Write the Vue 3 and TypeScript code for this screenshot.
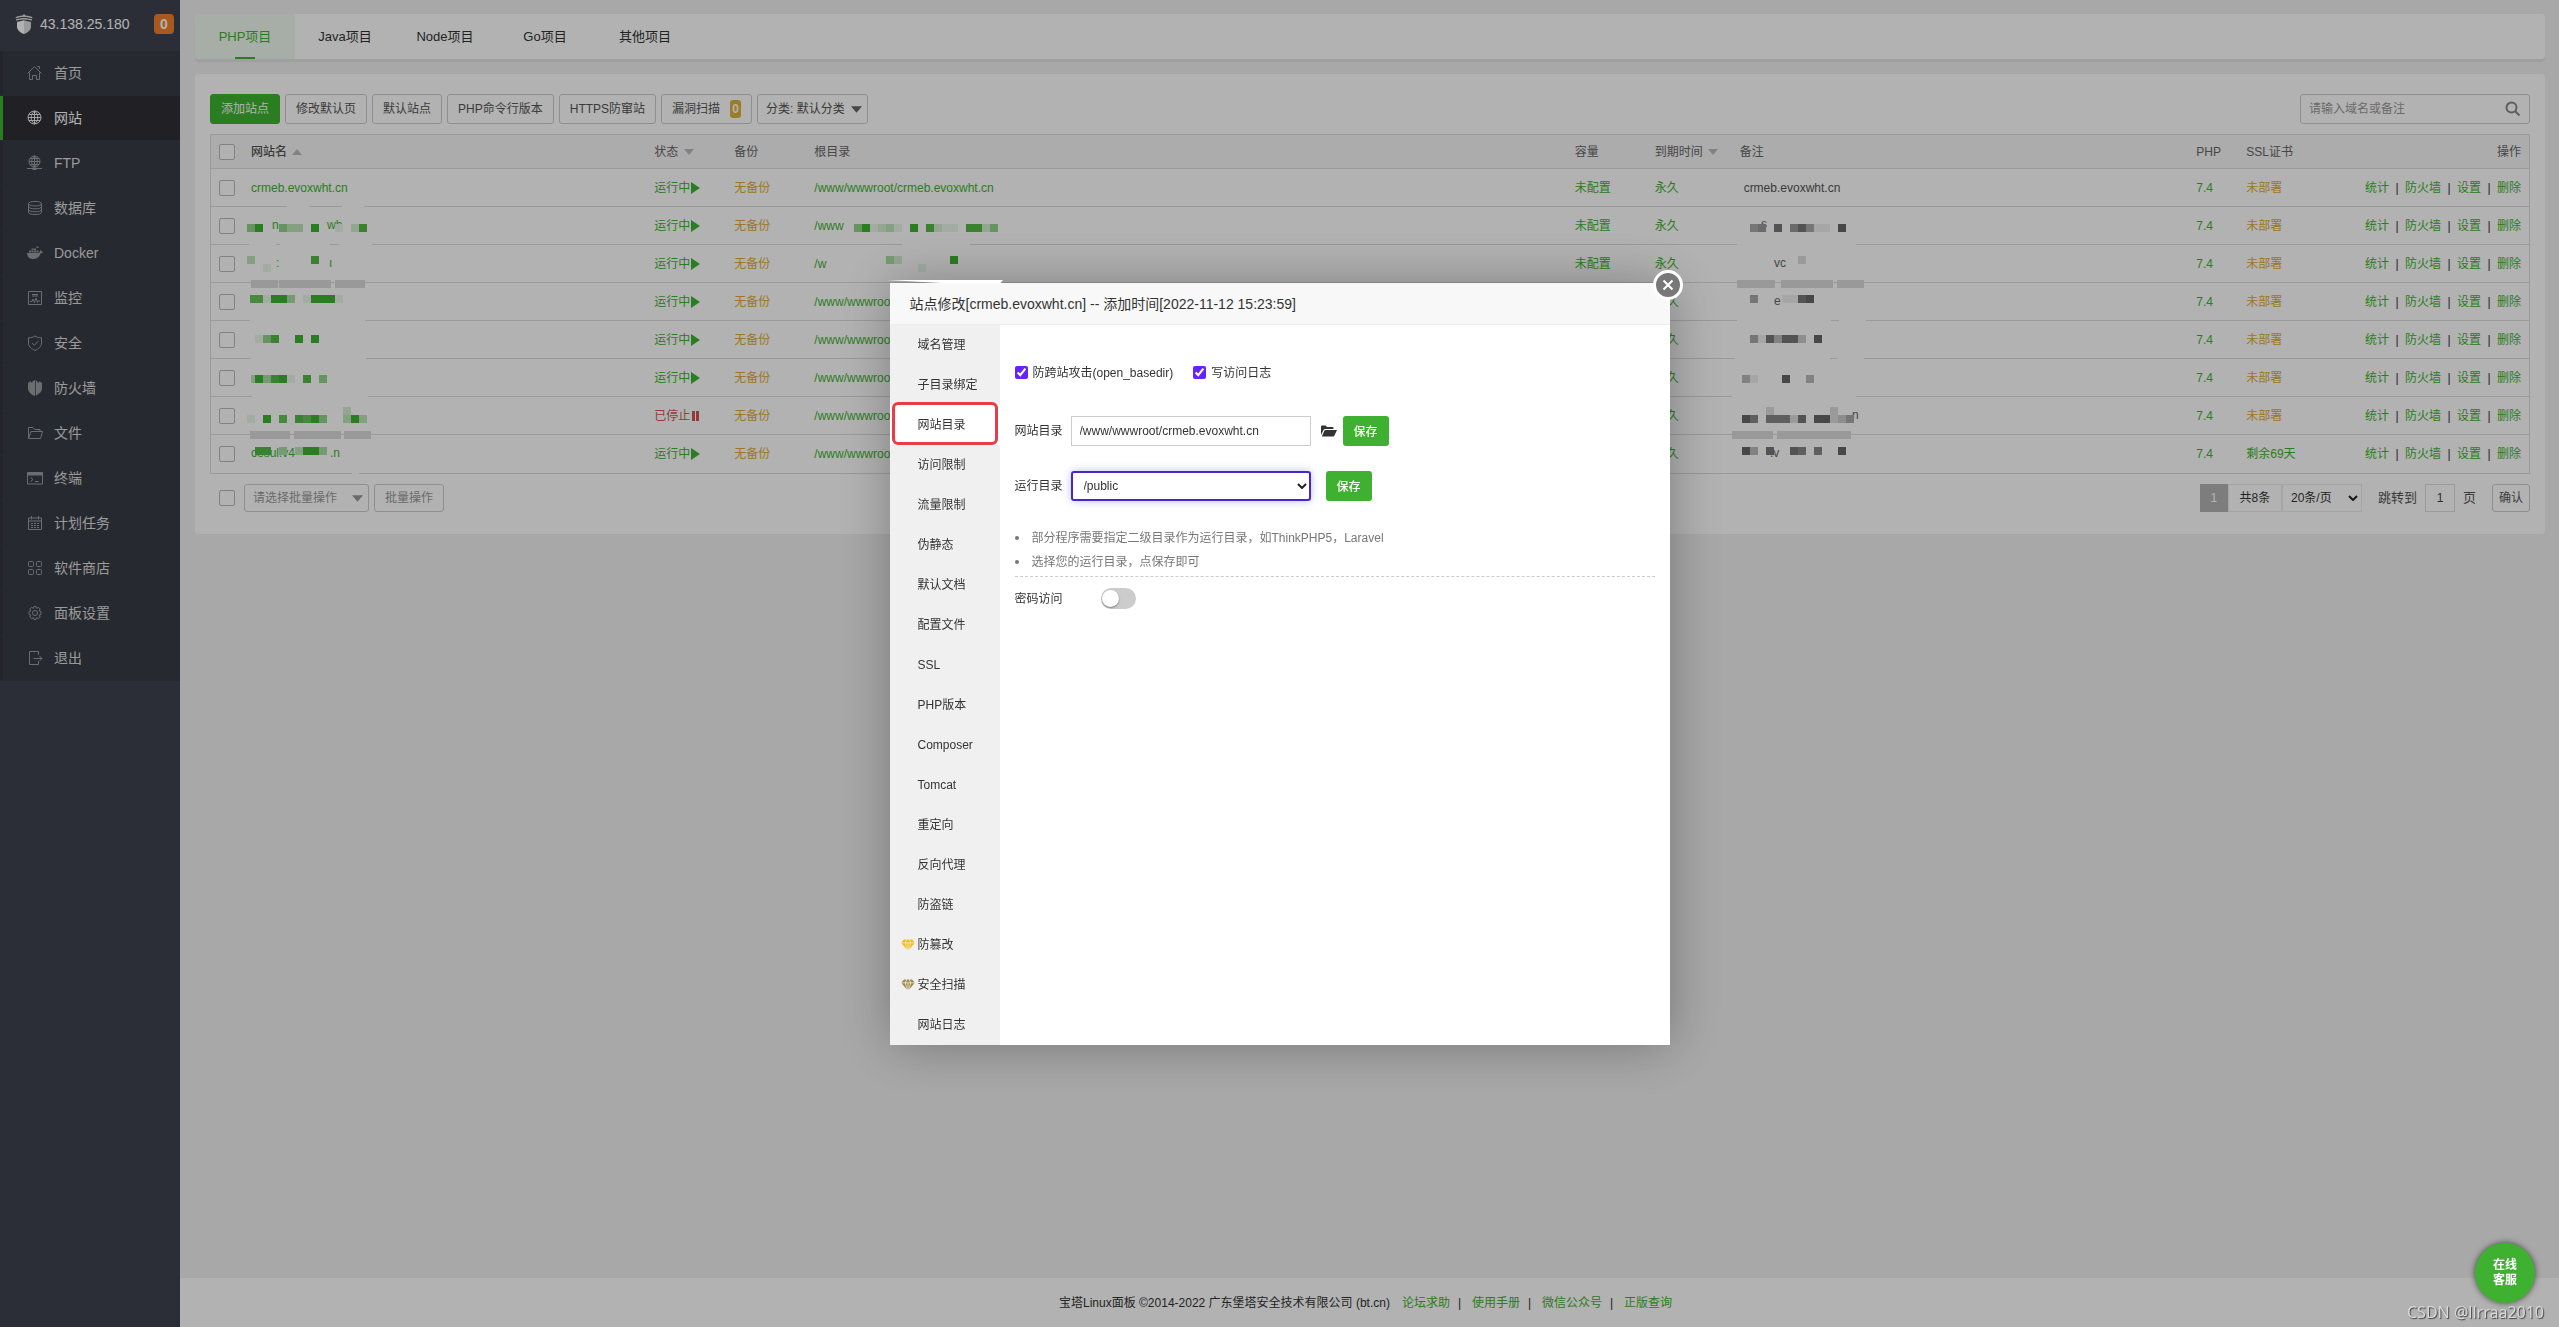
<script setup lang="ts">
import { ref } from 'vue'

interface Icon { stroke?: string; fill?: string }
interface MenuItem { label: string; icon: Icon; active?: boolean }
interface Strip { x: number; y: number; ops: string }
interface Rect { x: number; y: number; w: number; h: number }
interface Fragment { x: number; y: number; t: string }
interface Mask { strips?: Strip[]; gaps?: Rect[]; bars?: Rect[]; frags?: Fragment[] }
interface Site {
  name: string; running: boolean; path: string; note: string; ssl: string; deployed?: boolean
  nameMask?: Mask; pathMask?: Mask; noteMask?: Mask
}

const menu: MenuItem[] = [
  { label: '首页', icon: { stroke: 'M.5 8.500 7.500 1.500l7 7M2.500 7.500v7h3v-4h4v4h3v-7M10.500 1.500h2v2.500' } },
  { label: '网站', active: true, icon: { stroke: 'M7.500 1a6.500 6.500 0 1 0 0 13a6.500 6.500 0 1 0 0-13zM7.500 1v13M1 7.500h13M2 4.500h11M2 10.500h11M7.500 1c-4.500 3.500-4.500 9.500 0 13M7.500 1c4.500 3.500 4.500 9.500 0 13' } },
  { label: 'FTP', icon: { stroke: 'M7.500 1a5.500 5.500 0 1 0 0 11a5.500 5.500 0 1 0 0-11zM7.500 1v11M2 6.500h11M3 3.500h9M3 9.500h9M7.500 1c-3.800 3-3.800 8 0 11M7.500 1c3.800 3 3.800 8 0 11M0 13.500h15', fill: 'M5.500 12.500h4V15h-4z' } },
  { label: '数据库', icon: { stroke: 'M1.500 3.700c0-3 13-3 13 0s-13 3-13 0v8.600c0 3 13 3 13 0V3.700M1.500 6.600c0 3 13 3 13 0M1.500 9.500c0 3 13 3 13 0' } },
  { label: 'Docker', icon: { fill: 'M0 8h11.500c1 0 1.500-.6 1.300-2l.7-1c.8.5 1.100 1.200 1 1.800.6 0 1.100 0 1.500.3-.4 1-1.400 1.400-2.500 1.400C12.300 12 9.800 14 6 14 2.500 14 0 12 0 8zM2 5.500h2v2H2zM4.500 5.500h2v2h-2zM7 5.500h2v2H7zM9.500 5.500h2v2h-2zM4.500 3.500h2v1.500h-2zM7 3.500h2v1.500H7zM9.500 1.500h2V3h-2z' } },
  { label: '监控', icon: { stroke: 'M1.500 1.500h13v13h-13zM3 11.500h2l1-2.500 1.500 3.500L9 8l1.500 4.500.8-1.500H13M5 4.500h6M5 6h6' } },
  { label: '安全', icon: { stroke: 'M8 1c2 1.300 4.300 1.800 6.500 1.800V8c0 3.500-3 6-6.500 7.500C4.500 14 1.500 11.500 1.500 8V2.800C3.700 2.800 6 2.300 8 1zM5 8l2.300 2.300L11.500 6' } },
  { label: '防火墙', icon: { fill: 'M8 0v16C4 14.500 1 12 1 8V2.500h1.500v-1H4v1h1.500V1H7V0zM8.700.5v15C12 14 15 12 15 8V2.500h-1.500v-1H12v1h-1.500V1z' } },
  { label: '文件', icon: { stroke: 'M1.500 13.500v-11h4.500l1.500 2h5.500v2M1.500 13.500l2.500-7h11.500l-2 7z' } },
  { label: '终端', icon: { stroke: 'M.5 2.500h15v11.500H.5zM.5 5h15M3.500 7.500 6 9.500l-2.500 2M8 11.500h3.500', fill: 'M.5 2.500h15V5H.5z' } },
  { label: '计划任务', icon: { stroke: 'M1.500 3h13v11.500h-13zM1.500 6h13M4.500 1v3.500M11.500 1v3.500M4 8.500h2M7 8.500h2M10 8.500h2M4 10.500h2M7 10.500h2M10 10.500h2M4 12.500h2M7 12.500h2M10 12.500h2' } },
  { label: '软件商店', icon: { stroke: 'M2.500 1.500h3a1 1 0 0 1 1 1v3a1 1 0 0 1-1 1h-3a1 1 0 0 1-1-1v-3a1 1 0 0 1 1-1zM10.500 1.500h3a1 1 0 0 1 1 1v3a1 1 0 0 1-1 1h-3a1 1 0 0 1-1-1v-3a1 1 0 0 1 1-1zM2.500 9.500h3a1 1 0 0 1 1 1v3a1 1 0 0 1-1 1h-3a1 1 0 0 1-1-1v-3a1 1 0 0 1 1-1zM10.500 9.500h3a1 1 0 0 1 1 1v3a1 1 0 0 1-1 1h-3a1 1 0 0 1-1-1v-3a1 1 0 0 1 1-1z' } },
  { label: '面板设置', icon: { stroke: 'M8 5.500a2.500 2.500 0 1 0 0 5a2.500 2.500 0 1 0 0-5zM7 1.500h2l.6 1.800 2-.9 1.500 1.500-.9 2 1.800.6v3l-1.800.6.9 2-1.500 1.500-2-.9-.6 1.800H7l-.6-1.800-2 .9-1.500-1.500.9-2L2 9.500v-3l1.800-.6-.9-2 1.500-1.500 2 .9z' } },
  { label: '退出', icon: { stroke: 'M11.500 5V1.500h-9v13h9V11M6.500 8.500H15M12.500 6 15 8.500 12.500 11' } },
]

const tabs = ['PHP项目', 'Java项目', 'Node项目', 'Go项目', '其他项目']

const sites: Site[] = [
  {
    name: 'crmeb.evoxwht.cn', running: true, path: '/www/wwwroot/crmeb.evoxwht.cn', note: 'crmeb.evoxwht.cn', ssl: '未部署',
    nameMask: { gaps: [{ x: 44, y: 36, w: 22, h: 3 }, { x: 99, y: 36, w: 22, h: 3 }] },
  },
  {
    name: '', running: true, path: '/www', note: '', ssl: '未部署',
    nameMask: {
      strips: [{ x: 4, y: 17, ops: '5900533090' }, { x: 92, y: 17, ops: '1028' }],
      gaps: [{ x: 6, y: 36, w: 27, h: 3 }, { x: 37, y: 36, w: 50, h: 3 }, { x: 96, y: 36, w: 33, h: 3 }],
      frags: [{ x: 29, y: 22, t: 'n' }, { x: 84, y: 22, t: 'wh' }],
    },
    pathMask: { strips: [{ x: 48, y: 17, ops: '591231090821108825' }], gaps: [{ x: 96, y: 36, w: 68, h: 3 }] },
    noteMask: { strips: [{ x: 18, y: 17, ops: '560806851109' }], gaps: [{ x: 5, y: 36, w: 119, h: 3 }], frags: [{ x: 29, y: 21, t: 's' }] },
  },
  {
    name: '', running: true, path: '/w', note: '', ssl: '未部署',
    nameMask: {
      strips: [{ x: 4, y: 11, ops: '300000008' }, { x: 20, y: 19, ops: '1' }],
      bars: [{ x: 8, y: 35, w: 27, h: 8 }, { x: 36, y: 35, w: 52, h: 8 }, { x: 92, y: 35, w: 30, h: 8 }],
      frags: [{ x: 33, y: 22, t: ':' }, { x: 86, y: 22, t: 'ı' }],
    },
    pathMask: { strips: [{ x: 80, y: 11, ops: '420000009' }, { x: 112, y: 19, ops: '1' }] },
    noteMask: {
      strips: [{ x: 66, y: 11, ops: '2' }],
      bars: [{ x: 5, y: 35, w: 38, h: 8 }, { x: 49, y: 35, w: 52, h: 8 }, { x: 105, y: 35, w: 27, h: 8 }],
      frags: [{ x: 42, y: 22, t: 'vc' }],
    },
  },
  {
    name: '', running: true, path: '/www/wwwroot', note: '', ssl: '未部署',
    nameMask: { strips: [{ x: 7, y: 12, ops: '7' }, { x: 12, y: 12, ops: '7199401999' }, { x: 92, y: 12, ops: '1' }], gaps: [{ x: 7, y: 36, w: 115, h: 3 }] },
    noteMask: { strips: [{ x: 18, y: 12, ops: '50001189' }], gaps: [{ x: 5, y: 36, w: 94, h: 3 }, { x: 107, y: 36, w: 27, h: 3 }], frags: [{ x: 42, y: 22, t: 'e' }] },
  },
  {
    name: '', running: true, path: '/www/wwwroot', note: '', ssl: '未部署',
    nameMask: { strips: [{ x: 12, y: 14, ops: '15800909' }], gaps: [{ x: 8, y: 36, w: 115, h: 3 }] },
    noteMask: { strips: [{ x: 18, y: 14, ops: '518488309' }], gaps: [{ x: 3, y: 36, w: 95, h: 3 }, { x: 105, y: 36, w: 27, h: 3 }] },
  },
  {
    name: '', running: true, path: '/www/wwwroot', note: '', ssl: '未部署',
    nameMask: { strips: [{ x: 8, y: 16, ops: '3' }, { x: 12, y: 16, ops: '948910805' }], gaps: [{ x: 9, y: 36, w: 116, h: 3 }] },
    noteMask: { strips: [{ x: 10, y: 16, ops: '410009004' }], gaps: [{ x: 0, y: 36, w: 124, h: 3 }] },
  },
  {
    name: '', running: false, path: '/www/wwwroot', note: '', ssl: '未部署',
    nameMask: {
      strips: [{ x: 4, y: 18, ops: '109070879500393' }, { x: 100, y: 10, ops: '2' }],
      bars: [{ x: 7, y: 34, w: 40, h: 8 }, { x: 51, y: 34, w: 47, h: 8 }, { x: 101, y: 34, w: 27, h: 8 }],
    },
    noteMask: {
      strips: [{ x: 10, y: 18, ops: '97077728099235' }, { x: 34, y: 10, ops: '2' }, { x: 98, y: 10, ops: '2' }],
      bars: [{ x: 0, y: 34, w: 41, h: 8 }, { x: 45, y: 34, w: 74, h: 8 }],
      frags: [{ x: 120, y: 22, t: 'n' }],
    },
  },
  {
    name: '', running: true, path: '/www/wwwroot', note: '', ssl: '剩余69天', deployed: true,
    nameMask: {
      strips: [{ x: 12, y: 12, ops: '88' }, { x: 36, y: 12, ops: '4' }, { x: 52, y: 12, ops: '3994' }],
      gaps: [{ x: 109, y: 36, w: 7, h: 3 }],
      frags: [{ x: 8, y: 22, t: 'cesul.v4' }, { x: 87, y: 22, t: '.n' }],
    },
    noteMask: { strips: [{ x: 10, y: 12, ops: '9408008707009' }], frags: [{ x: 38, y: 22, t: '.v' }] },
  },
]

/** Blends a base colour towards white; level runs from 0 (white) to 9 (solid). */
function shade(base: [number, number, number], level: number): string {
  const mix = base.map((c) => Math.round(255 - ((255 - c) * level) / 9))
  return `rgb(${mix.join(',')})`
}

interface Block { x: number; y: number; fill: string }
function blocks(mask: Mask, base: [number, number, number]): Block[] {
  return (mask.strips ?? []).flatMap((s) =>
    [...s.ops]
      .map((op, i) => ({ x: s.x + i * 8, y: s.y, level: Number(op) }))
      .filter((b) => b.level > 0)
      .map((b) => ({ x: b.x, y: b.y, fill: shade(base, b.level) })),
  )
}
const GREEN: [number, number, number] = [61, 179, 46]
const GREY: [number, number, number] = [102, 102, 102]

function masks(site: Site, column: 'name' | 'path' | 'note') {
  const mask = column === 'name' ? site.nameMask : column === 'path' ? site.pathMask : site.noteMask
  if (!mask) return []
  const base = column === 'note' ? GREY : GREEN
  return [{ mask, blocks: blocks(mask, base), ink: shade(base, 9) }]
}

const settings = [
  '域名管理', '子目录绑定', '网站目录', '访问限制', '流量限制', '伪静态', '默认文档', '配置文件', 'SSL',
  'PHP版本', 'Composer', 'Tomcat', '重定向', '反向代理', '防盗链', '防篡改', '安全扫描', '网站日志',
]
const gems: Record<string, string> = { 防篡改: '#f3b90c', 安全扫描: '#9c8a4a' }

const links = ['论坛求助', '使用手册', '微信公众号', '正版查询']
const antiCross = ref(true)
const accessLog = ref(true)
const siteDir = ref('/www/wwwroot/crmeb.evoxwht.cn')
const password = ref(false)
const keyword = ref('')
const pageNo = ref('1')
</script>

<template>
  <div class="app">
    <aside class="sidebar">
      <header class="brand">
        <svg class="logo" viewBox="0 0 18 20" aria-hidden="true">
          <path d="M9 0l1.500 1.500C13 1.600 15.500 2 17.500 3.200L17 4.500C14.500 3.200 12 3 9 3s-5.500.2-8 1.500L.5 3.200C2.500 2 5 1.600 7.500 1.500zM1 5.500C6 3.500 12 3.500 17 5.500v1.200C12 5 6 5 1 6.700z" fill="#ddd" />
          <path d="M2 8l7-1.800V20c-4-1.500-7-4-7-7.500z" fill="#fff" />
          <path d="M16 8L9 6.200V20c4-1.500 7-4 7-7.500z" fill="#ddd" />
        </svg>
        <span class="ip">43.138.25.180</span>
        <span class="count">0</span>
      </header>
      <nav class="menu">
        <a v-for="item in menu" :key="item.label" href="#" class="menu-item" :class="{ active: item.active }">
          <svg class="menu-icon" viewBox="0 0 16 16" aria-hidden="true">
            <path v-if="item.icon.fill" :d="item.icon.fill" fill="currentColor" />
            <path v-if="item.icon.stroke" :d="item.icon.stroke" fill="none" stroke="currentColor" />
          </svg>
          <span>{{ item.label }}</span>
        </a>
      </nav>
    </aside>

    <main class="main">
      <nav class="tabs">
        <a v-for="(tab, i) in tabs" :key="tab" href="#" class="tab" :class="{ current: i === 0 }">{{ tab }}</a>
      </nav>

      <section class="card">
        <div class="toolbar">
          <button type="button" class="btn primary">添加站点</button>
          <button type="button" class="btn">修改默认页</button>
          <button type="button" class="btn">默认站点</button>
          <button type="button" class="btn">PHP命令行版本</button>
          <button type="button" class="btn">HTTPS防窜站</button>
          <button type="button" class="btn scan">漏洞扫描<span class="scan-count">0</span></button>
          <span class="picker category">
            <select aria-label="分类"><option>分类: 默认分类</option></select>
            <svg class="caret" viewBox="0 0 12 7" aria-hidden="true"><path d="M0 0h12L6 7z" fill="#666" /></svg>
          </span>
          <div class="search">
            <input v-model="keyword" type="text" placeholder="请输入域名或备注" aria-label="搜索" />
            <button type="button" aria-label="搜索">
              <svg viewBox="0 0 16 16" aria-hidden="true"><path d="M6.500 1.500a5 5 0 1 0 0 10a5 5 0 1 0 0-10zM10.200 10.200l4.300 4.300" fill="none" stroke="#888" stroke-width="2" /></svg>
            </button>
          </div>
        </div>

        <table class="sites">
          <colgroup>
            <col class="c-check" /><col class="c-name" /><col class="c-80" /><col class="c-80" /><col class="c-path" />
            <col class="c-80" /><col class="c-exp" /><col class="c-note" /><col class="c-php" /><col class="c-80" /><col />
          </colgroup>
          <thead>
            <tr>
              <th><input type="checkbox" class="tick" aria-label="全选" /></th>
              <th class="strong">网站名 <svg class="sort" viewBox="0 0 10 6" aria-hidden="true"><path d="M0 6h10L5 0z" fill="#bbb" /></svg></th>
              <th>状态 <svg class="sort" viewBox="0 0 10 6" aria-hidden="true"><path d="M0 0h10L5 6z" fill="#bbb" /></svg></th>
              <th>备份</th>
              <th>根目录</th>
              <th>容量</th>
              <th>到期时间 <svg class="sort" viewBox="0 0 10 6" aria-hidden="true"><path d="M0 0h10L5 6z" fill="#bbb" /></svg></th>
              <th>备注</th>
              <th>PHP</th>
              <th>SSL证书</th>
              <th class="right">操作</th>
            </tr>
          </thead>
          <tbody>
            <tr v-for="(site, i) in sites" :key="i">
              <td><input type="checkbox" class="tick" :aria-label="'选择站点 ' + (i + 1)" /></td>
              <td>
                <a v-if="site.name" href="#">{{ site.name }}</a>
                <svg v-for="(m, k) in masks(site, 'name')" :key="k" class="mask">
                  <rect v-for="(g, n) in m.mask.gaps" :key="'g' + n" :x="g.x" :y="g.y" :width="g.w" :height="g.h" fill="#fff" />
                  <text v-for="(f, n) in m.mask.frags" :key="'f' + n" :x="f.x" :y="f.y" :fill="m.ink">{{ f.t }}</text>
                  <rect v-for="(b, n) in m.mask.bars" :key="'b' + n" :x="b.x" :y="b.y" :width="b.w" :height="b.h" fill="#dcdcdc" />
                  <rect v-for="(b, n) in m.blocks" :key="n" :x="b.x" :y="b.y" width="8" height="8" :fill="b.fill" />
                </svg>
              </td>
              <td>
                <a v-if="site.running" href="#">运行中<svg class="state" viewBox="0 0 9 12" aria-hidden="true"><path d="M0 0l9 6-9 6z" fill="currentColor" /></svg></a>
                <a v-else href="#" class="stopped">已停止<svg class="state" viewBox="0 0 9 12" aria-hidden="true"><path d="M1 1h3v10H1zM5 1h3v10H5z" fill="currentColor" /></svg></a>
              </td>
              <td><a href="#" class="warn">无备份</a></td>
              <td>
                <a href="#">{{ site.path }}</a>
                <svg v-for="(m, k) in masks(site, 'path')" :key="k" class="mask">
                  <rect v-for="(g, n) in m.mask.gaps" :key="'g' + n" :x="g.x" :y="g.y" :width="g.w" :height="g.h" fill="#fff" />
                  <rect v-for="(b, n) in m.blocks" :key="n" :x="b.x" :y="b.y" width="8" height="8" :fill="b.fill" />
                </svg>
              </td>
              <td><a href="#">未配置</a></td>
              <td><a href="#">永久</a></td>
              <td>
                <span class="note">{{ site.note }}</span>
                <svg v-for="(m, k) in masks(site, 'note')" :key="k" class="mask">
                  <rect v-for="(g, n) in m.mask.gaps" :key="'g' + n" :x="g.x" :y="g.y" :width="g.w" :height="g.h" fill="#fff" />
                  <text v-for="(f, n) in m.mask.frags" :key="'f' + n" :x="f.x" :y="f.y" :fill="m.ink">{{ f.t }}</text>
                  <rect v-for="(b, n) in m.mask.bars" :key="'b' + n" :x="b.x" :y="b.y" :width="b.w" :height="b.h" fill="#dcdcdc" />
                  <rect v-for="(b, n) in m.blocks" :key="n" :x="b.x" :y="b.y" width="8" height="8" :fill="b.fill" />
                </svg>
              </td>
              <td><a href="#">7.4</a></td>
              <td><a href="#" :class="{ warn: !site.deployed }">{{ site.ssl }}</a></td>
              <td class="right">
                <span class="ops"><a href="#">统计</a><i>|</i><a href="#">防火墙</a><i>|</i><a href="#">设置</a><i>|</i><a href="#">删除</a></span>
              </td>
            </tr>
          </tbody>
        </table>

        <div class="bottom">
          <input type="checkbox" class="tick" aria-label="全选" />
          <span class="picker bulk">
            <select aria-label="批量操作"><option>请选择批量操作</option></select>
            <svg class="caret" viewBox="0 0 12 7" aria-hidden="true"><path d="M0 0h12L6 7z" fill="#999" /></svg>
          </span>
          <button type="button" class="btn small muted">批量操作</button>
          <div class="pager">
            <span class="page-now">1</span>
            <span class="total">共8条</span>
            <span class="picker size">
              <select aria-label="每页条数"><option>20条/页</option></select>
              <svg class="chevron" viewBox="0 0 10 6" aria-hidden="true"><path d="M1 1l4 4 4-4" fill="none" stroke="#222" stroke-width="2" /></svg>
            </span>
            <label class="jump" for="page-no">跳转到</label>
            <input id="page-no" v-model="pageNo" class="page-input" type="text" />
            <span class="unit">页</span>
            <button type="button" class="btn small confirm">确认</button>
          </div>
        </div>
      </section>

      <footer class="footer">
        <span class="copy">宝塔Linux面板 ©2014-2022 广东堡塔安全技术有限公司 (bt.cn)</span>
        <template v-for="(link, i) in links" :key="link">
          <i v-if="i > 0">|</i><a href="#">{{ link }}</a>
        </template>
      </footer>
    </main>

    <div class="overlay">
      <div class="dialog" role="dialog" aria-labelledby="dialog-title">
        <svg class="streak" viewBox="0 0 116 4" aria-hidden="true"><path d="M0 0h116l-3 4H72z" fill="#fff" /></svg>
        <h2 id="dialog-title" class="dialog-title">站点修改[crmeb.evoxwht.cn] -- 添加时间[2022-11-12 15:23:59]</h2>
        <button type="button" class="close" aria-label="关闭">
          <svg viewBox="0 0 12 12" aria-hidden="true"><path d="M1.500 1.500l9 9M10.500 1.500l-9 9" stroke="#fff" stroke-width="2" /></svg>
        </button>
        <div class="dialog-body">
          <nav class="side">
            <a v-for="s in settings" :key="s" href="#" class="side-item" :class="{ chosen: s === '网站目录' }">
              <svg v-if="gems[s]" class="gem" viewBox="0 0 14 12" aria-hidden="true">
                <path d="M3 .5h2.300L4 3.500H.3zM6.200.5h1.600L9.200 3.500H4.800zM8.700.5H11l2.700 3H10zM.5 4.300h3.400l2 6.200zM4.700 4.300h1.900v7zM7.400 4.300h1.900l-1.900 7zM10.100 4.300h3.400l-5.400 6.200z" :fill="gems[s]" />
              </svg>
              {{ s }}
            </a>
          </nav>
          <div class="pane">
            <div class="checks">
              <label><input v-model="antiCross" type="checkbox" class="box" />防跨站攻击(open_basedir)</label>
              <label><input v-model="accessLog" type="checkbox" class="box" />写访问日志</label>
            </div>
            <div class="line">
              <label for="site-dir">网站目录</label>
              <input id="site-dir" v-model="siteDir" class="field" type="text" />
              <svg class="folder" viewBox="0 0 16 12" aria-hidden="true"><path d="M0 10V1.500Q0 .5 1 .5h3.500l1.500 1.500h5.500q1 0 1 1V4H4.200Q3 4 2.500 5zM.8 11.500 3.500 5.600Q3.800 5 4.500 5H16l-2.700 5.800q-.3.7-1 .7z" fill="#333" /></svg>
              <button type="button" class="save">保存</button>
            </div>
            <div class="line">
              <label for="run-dir">运行目录</label>
              <span class="picker run">
                <select id="run-dir"><option>/public</option></select>
                <svg class="chevron" viewBox="0 0 10 6" aria-hidden="true"><path d="M1 1l4 4 4-4" fill="none" stroke="#222" stroke-width="2" /></svg>
              </span>
              <button type="button" class="save">保存</button>
            </div>
            <ul class="tips">
              <li>部分程序需要指定二级目录作为运行目录，如ThinkPHP5，Laravel</li>
              <li>选择您的运行目录，点保存即可</li>
            </ul>
            <div class="switch-row">
              <label for="pwd">密码访问</label>
              <input id="pwd" v-model="password" type="checkbox" class="switch" />
            </div>
          </div>
        </div>
      </div>
    </div>

    <button type="button" class="service">在线<br />客服</button>
    <span class="watermark">CSDN @llrraa2010</span>
  </div>
</template>

<style>
body {
  margin: 0;
}
</style>

<style scoped>
.app,
.app button,
.app input,
.app select {
  font-family: "Liberation Sans", "Noto Sans CJK SC", sans-serif;
}
.app {
  display: flex;
  min-height: 100vh;
  background: #f1f1f1;
  color: #333;
  font-size: 12px;
  line-height: 18px;
}
.app *,
.app *::before,
.app *::after {
  box-sizing: border-box;
}
a {
  color: #3db32e;
  text-decoration: none;
}
i {
  font-style: normal;
}

/* sidebar */
.sidebar {
  flex: none;
  width: 180px;
  background: #3e434f;
}
.brand {
  display: flex;
  align-items: center;
  height: 51px;
  padding: 0 6px 3px 15px;
  color: #fff;
  font-size: 14px;
}
.logo {
  width: 18px;
  height: 20px;
}
.ip {
  flex: 1;
  margin-left: 7px;
}
.count {
  width: 20px;
  height: 20px;
  border-radius: 4px;
  background: #f0802d;
  font-weight: bold;
  line-height: 20px;
  text-align: center;
}
.menu {
  display: flex;
  flex-direction: column;
  background: #383c46;
}
.menu-item {
  display: flex;
  align-items: center;
  gap: 11px;
  height: 44px;
  margin-bottom: 1px;
  padding-left: 24px;
  border-left: 3px solid #33363e;
  color: #ddd;
  font-size: 14px;
}
.menu-item.active {
  border-left-color: #3db32e;
  background: #2e2f36;
  color: #fff;
}
.menu-icon {
  width: 16px;
  height: 16px;
  opacity: 0.6;
}
.active .menu-icon {
  opacity: 0.9;
}

/* page */
.main {
  display: flex;
  flex: 1;
  flex-direction: column;
  min-width: 0;
}
.tabs {
  display: flex;
  height: 45px;
  margin: 14px 14px 0 15px;
  border-radius: 4px;
  background: #fff;
  box-shadow: 0 3px 1px #e4e4e4;
}
.tab {
  display: flex;
  position: relative;
  align-items: center;
  justify-content: center;
  width: 100px;
  color: #333;
  font-size: 13px;
}
.tab.current {
  border-radius: 4px 0 0 4px;
  background: #f0f9ef;
  color: #3db32e;
}
.tab.current::after {
  position: absolute;
  bottom: 0;
  width: 20px;
  height: 2px;
  background: #3db32e;
  content: "";
}
.card {
  margin: 15px 14px 0 15px;
  padding: 20px 15px 22px;
  border-radius: 4px;
  background: #fff;
}
.toolbar {
  display: flex;
  gap: 5px;
  margin-bottom: 10px;
}
.btn {
  height: 30px;
  padding: 0 10px;
  border: 1px solid #ccc;
  border-radius: 3px;
  background: #fff;
  color: #555;
  font-size: 12px;
  line-height: 18px;
  white-space: nowrap;
}
.btn.primary {
  border-color: #3db32e;
  background: #3db32e;
  color: #fff;
}
.scan {
  display: flex;
  align-items: center;
  gap: 10px;
}
.scan-count {
  width: 11px;
  border-radius: 3px;
  background: #dfb23c;
  color: #fff;
  font-weight: bold;
  text-align: center;
}
.picker {
  display: block;
  position: relative;
}
.picker select {
  width: 100%;
  height: 100%;
  padding: 0 8px;
  border: 1px solid #ccc;
  border-radius: 3px;
  outline: 0;
  background: #fff;
  color: #555;
  font-size: 12px;
  appearance: none;
}
.caret,
.chevron {
  position: absolute;
  top: calc(50% - 3px);
  right: 6px;
  width: 11px;
  height: 7px;
  pointer-events: none;
}
.category {
  width: 111px;
}
.search {
  display: flex;
  width: 230px;
  height: 30px;
  margin-left: auto;
  border: 1px solid #ccc;
  border-radius: 3px;
}
.search input {
  flex: 1;
  min-width: 0;
  padding: 0 8px;
  border: 0;
  outline: 0;
  background: none;
  font-size: 12px;
}
.search input::placeholder {
  color: #999;
}
.search button {
  display: flex;
  align-items: center;
  padding: 0 8px;
  border: 0;
  background: none;
}
.search svg {
  width: 16px;
  height: 16px;
}

/* table */
.sites {
  width: 100%;
  border: 1px solid #ddd;
  border-spacing: 0;
  table-layout: fixed;
}
.c-check { width: 32px; }
.c-80 { width: 80px; }
.c-exp { width: 85px; }
.c-php { width: 50px; }
.c-name { width: 17.4%; }
.c-path { width: 32.8%; }
.c-note { width: 19.7%; }
.sites th,
.sites td {
  position: relative;
  padding: 0 8px;
  border-bottom: 1px solid #ddd;
  text-align: left;
  white-space: nowrap;
}
.sites th {
  height: 34px;
  background: #f6f6f6;
  color: #666;
  font-weight: normal;
}
.sites th.strong {
  font-weight: 500;
  color: #555;
}
.sites td {
  height: 38px;
}
.sites tr:last-child td {
  border-bottom: 0;
}
.sites .right {
  text-align: right;
}
.sort {
  width: 10px;
  height: 6px;
  margin-left: 2px;
  vertical-align: 1px;
}
.state {
  width: 9px;
  height: 12px;
  margin-left: 1px;
  vertical-align: -2px;
}
.warn {
  color: #e0ac35;
}
.stopped {
  color: #d9534f;
}
.note {
  padding-left: 4px;
  color: #555;
}
.ops {
  display: inline-flex;
}
.ops i {
  width: 16px;
  text-align: center;
}
.mask {
  position: absolute;
  top: 0;
  left: 0;
  width: 140px;
  height: 38px;
  overflow: visible;
  font-size: 12px;
  pointer-events: none;
}
.tick {
  display: block;
  width: 16px;
  height: 16px;
  margin: 0;
  border: 1px solid #bbb;
  border-radius: 2px;
  background: #fff;
  appearance: none;
}

/* below the table */
.bottom {
  display: flex;
  align-items: center;
  height: 28px;
  margin-top: 10px;
  padding-left: 9px;
}
.bulk {
  width: 125px;
  height: 28px;
  margin: 0 5px 0 9px;
}
.bulk select,
.btn.muted {
  color: #999;
}
.btn.small {
  height: 28px;
}
.pager {
  display: flex;
  align-items: center;
  height: 28px;
  margin-left: auto;
}
.page-now {
  width: 28px;
  background: #b4b4b4;
  color: #fff;
  line-height: 28px;
  text-align: center;
}
.total {
  width: 54px;
  border: 1px solid #ececec;
  line-height: 26px;
  text-align: center;
}
.size {
  width: 80px;
  height: 28px;
}
.size select {
  border-color: #ececec;
  border-radius: 0;
  color: #333;
}
.size .chevron,
.run .chevron {
  right: 4px;
  width: 10px;
  height: 6px;
}
.jump {
  margin: 0 8px 0 16px;
  color: #555;
  font-size: 13px;
}
.page-input {
  width: 30px;
  height: 28px;
  padding: 0;
  border: 1px solid #ddd;
  background: #fff;
  color: #444;
  font-size: 12px;
  text-align: center;
}
.unit {
  margin: 0 16px 0 8px;
  color: #555;
  font-size: 13px;
}
.btn.confirm {
  padding: 0 6px;
}

/* footer */
.footer {
  display: flex;
  align-items: center;
  justify-content: center;
  height: 49px;
  margin-top: auto;
  padding-right: 8px;
  background: #fff;
}
.copy {
  margin-right: 12px;
}
.footer i {
  width: 22px;
  padding-right: 3px;
  text-align: center;
}

/* dialog */
.overlay {
  display: grid;
  position: fixed;
  inset: 0;
  background: rgba(0, 0, 0, 0.3);
  place-items: center;
}
.dialog {
  position: relative;
  width: 780px;
  background: #fff;
  box-shadow: 1px 1px 50px rgba(0, 0, 0, 0.3);
}
.streak {
  position: absolute;
  top: -3px;
  left: -3px;
  width: 116px;
  height: 4px;
}
.dialog-title {
  position: relative;
  height: 42px;
  margin: 0;
  padding: 0 20px;
  border-bottom: 1px solid #eee;
  background: #f8f8f8;
  font-size: 14px;
  font-weight: normal;
  line-height: 42px;
}
.close {
  display: grid;
  position: absolute;
  top: -13px;
  right: -13px;
  width: 30px;
  height: 30px;
  padding: 0;
  border: 3px solid #fff;
  border-radius: 50%;
  background: #787878;
  place-items: center;
}
.close svg {
  width: 12px;
  height: 12px;
}
.dialog-body {
  display: flex;
}
.side {
  flex: none;
  width: 110px;
  background: #f0f0f0;
}
.side-item {
  display: block;
  position: relative;
  height: 40px;
  padding-left: 28px;
  color: #333;
  line-height: 40px;
}
.side-item.chosen {
  background: #fff;
}
.side-item.chosen::after {
  position: absolute;
  inset: -3px 2px 0;
  border: 3px solid #e93c48;
  border-radius: 6px;
  content: "";
}
.gem {
  position: absolute;
  top: 14px;
  left: 11px;
  width: 14px;
  height: 12px;
}
.pane {
  flex: 1;
  padding: 39px 15px 0;
}
.checks {
  display: flex;
  gap: 20px;
  margin-bottom: 34px;
}
.checks label {
  display: flex;
  align-items: center;
  gap: 5px;
}
.box {
  width: 13px;
  height: 13px;
  margin: 0;
  accent-color: #6423ff;
}
.line {
  display: flex;
  align-items: center;
  margin-bottom: 25px;
}
.line label {
  width: 56px;
}
.field,
.run {
  width: 240px;
  height: 30px;
}
.field {
  padding: 0 8px;
  border: 1px solid #ccc;
  color: #333;
  font-size: 12px;
}
.folder {
  width: 16px;
  height: 12px;
  margin: 0 6px 0 10px;
}
.run {
  margin-right: 15px;
}
.run select {
  padding: 0 11px;
  border: 2px solid #4c24cc;
  box-shadow: 0 0 8px rgba(70, 110, 220, 0.4);
  color: #333;
}
.save {
  width: 46px;
  height: 30px;
  padding: 0;
  border: 0;
  border-radius: 3px;
  background: #3fb130;
  color: #fff;
  font-size: 12px;
  font-weight: 500;
}
.tips {
  margin: 0;
  padding: 0 0 2px 17px;
  border-bottom: 1px dashed #ccc;
  color: #777;
  line-height: 24px;
}
.tips li {
  list-style: none;
}
.tips li::before {
  display: inline-block;
  width: 4px;
  height: 4px;
  margin: 0 13px 0 -17px;
  border-radius: 50%;
  background: #777;
  content: "";
  vertical-align: 2px;
}
.switch-row {
  display: flex;
  align-items: center;
  height: 44px;
}
.switch {
  display: flex;
  align-items: center;
  width: 35px;
  height: 21px;
  margin: 0 0 0 38px;
  padding: 0 1px;
  border-radius: 11px;
  background: #ccc;
  appearance: none;
}
.switch::before {
  width: 17px;
  height: 17px;
  border-radius: 50%;
  background: #fff;
  box-shadow: 0 1px 2px rgba(0, 0, 0, 0.4);
  content: "";
}

/* floating */
.service {
  position: fixed;
  right: 24px;
  bottom: 24px;
  width: 60px;
  height: 60px;
  padding: 0;
  border: 0;
  border-radius: 50%;
  background: #3fb130;
  box-shadow: 0 0 6px rgba(0, 0, 0, 0.6);
  color: #fff;
  font-size: 12px;
  font-weight: bold;
  line-height: 15px;
}
.watermark {
  position: fixed;
  right: 15px;
  bottom: 6px;
  color: #d8d8d8;
  font-family: "Noto Sans", sans-serif;
  font-size: 16px;
  text-shadow: 1px 1px 1px #444;
}
</style>
